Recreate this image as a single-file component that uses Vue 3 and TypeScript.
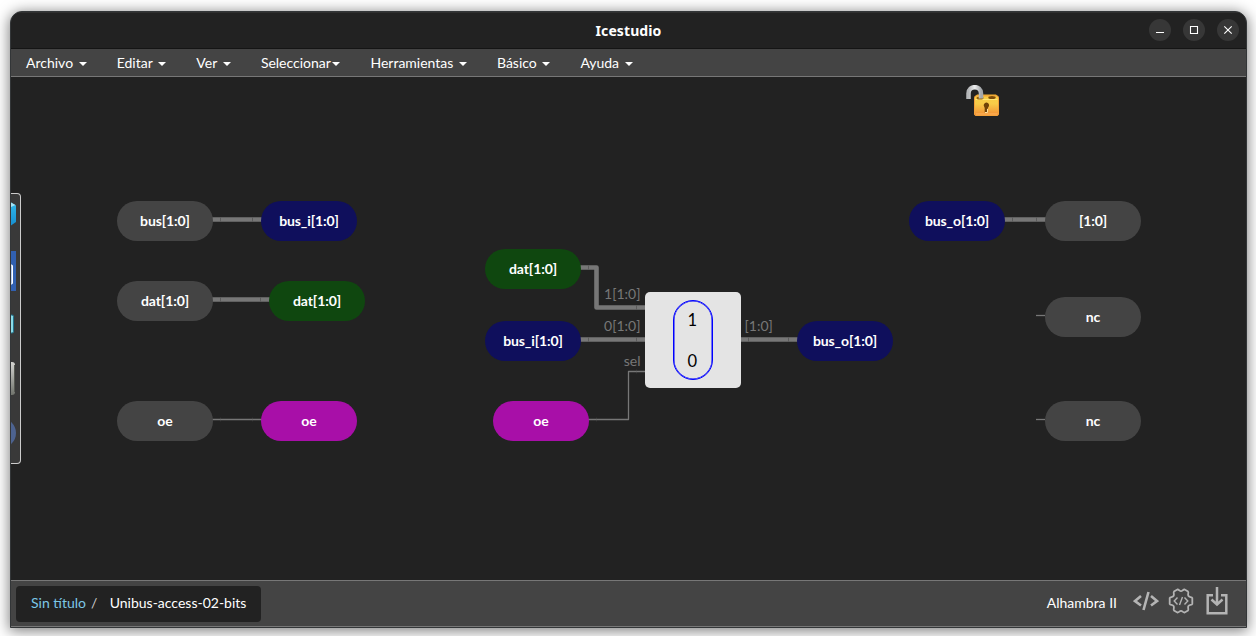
<script setup lang="ts">
interface Menu { label: string; tight?: boolean }
interface Block { label: string; x: number; y: number; kind: string }
interface Port { label: string; x: number; y: number; side: string }
interface Wire { d: string; bus: boolean; ticks: number[][] }

const menus: Menu[] = [
  { label: 'Archivo' },
  { label: 'Editar' },
  { label: 'Ver' },
  { label: 'Seleccionar', tight: true },
  { label: 'Herramientas' },
  { label: 'Básico' },
  { label: 'Ayuda' },
]

// Block coordinates are relative to the top-left corner of the canvas.
const blocks: Block[] = [
  { label: 'bus[1:0]', x: 106, y: 124, kind: 'io' },
  { label: 'bus_i[1:0]', x: 250, y: 124, kind: 'navy' },
  { label: 'dat[1:0]', x: 106, y: 204, kind: 'io' },
  { label: 'dat[1:0]', x: 258, y: 204, kind: 'green' },
  { label: 'oe', x: 106, y: 324, kind: 'io' },
  { label: 'oe', x: 250, y: 324, kind: 'magenta' },
  { label: 'dat[1:0]', x: 474, y: 172, kind: 'green' },
  { label: 'bus_i[1:0]', x: 474, y: 244, kind: 'navy' },
  { label: 'oe', x: 482, y: 324, kind: 'magenta' },
  { label: 'bus_o[1:0]', x: 786, y: 244, kind: 'navy' },
  { label: 'bus_o[1:0]', x: 898, y: 124, kind: 'navy' },
  { label: '[1:0]', x: 1034, y: 124, kind: 'io' },
  { label: 'nc', x: 1034, y: 220, kind: 'io' },
  { label: 'nc', x: 1034, y: 324, kind: 'io' },
]

const ports: Port[] = [
  { label: '1[1:0]', x: 629.5, y: 217, side: 'left' },
  { label: '0[1:0]', x: 629.5, y: 249, side: 'left' },
  { label: 'sel', x: 629.5, y: 284, side: 'left' },
  { label: '[1:0]', x: 733.5, y: 249, side: 'right' },
]

const wires: Wire[] = [
  { d: 'M200 142.5H252', bus: true, ticks: [[209.5, 142.5], [241.5, 142.5]] },
  { d: 'M200 222.5H260', bus: true, ticks: [[209.5, 222.5], [249.5, 222.5]] },
  { d: 'M200 342.5H252', bus: false, ticks: [[209.5, 342.5], [241.5, 342.5]] },
  { d: 'M568 190.5H585.5V230.5H634', bus: true, ticks: [[577.5, 190.5], [625.5, 230.5]] },
  { d: 'M568 262.5H634', bus: true, ticks: [[577.5, 262.5], [625.5, 262.5]] },
  { d: 'M576 342.5H617.5V294.5H634', bus: false, ticks: [[585.5, 342.5], [625.5, 294.5]] },
  { d: 'M730 262.5H788', bus: true, ticks: [[737.5, 262.5], [777.5, 262.5]] },
  { d: 'M992 142.5H1036', bus: true, ticks: [[1001.5, 142.5], [1025.5, 142.5]] },
  { d: 'M1025 238.5H1034', bus: false, ticks: [] },
  { d: 'M1025 342.5H1034', bus: false, ticks: [] },
]
</script>

<template>
  <main class="desktop">
    <section class="window">
      <header class="titlebar">
        <span class="title">Icestudio</span>
        <div class="controls">
          <span class="control"><svg viewBox="0 0 22 22"><path d="M7 13.5h8" /></svg></span>
          <span class="control"><svg viewBox="0 0 22 22"><path d="M7.5 7.5h7v7h-7z" /></svg></span>
          <span class="control"><svg viewBox="0 0 22 22"><path d="M7.3 7.3l7.4 7.4M14.7 7.3l-7.4 7.4" /></svg></span>
        </div>
      </header>

      <nav class="menubar">
        <span v-for="m in menus" :key="m.label" class="menu">{{ m.label }}<i class="caret" :class="{ tight: m.tight }"></i></span>
      </nav>

      <div class="canvas">
        <svg class="wires" width="1235" height="503" viewBox="0 0 1235 503">
          <g v-for="(w, i) in wires" :key="i">
            <path :d="w.d" :class="w.bus ? 'wire bus' : 'wire'" />
            <path v-for="(t, k) in w.ticks" :key="k" :class="w.bus ? 'tick' : 'tick faint'" :d="`M${t[0]} ${t[1] - 2}v4`" />
          </g>
        </svg>

        <div v-for="(b, i) in blocks" :key="i" class="block" :class="b.kind" :style="{ left: b.x + 'px', top: b.y + 'px' }">{{ b.label }}</div>
        <span v-for="(p, i) in ports" :key="'p' + i" class="port" :class="p.side" :style="{ left: p.x + 'px', top: p.y + 'px' }">{{ p.label }}</span>

        <div class="mux"><div class="mux-shape"><span>1</span><span>0</span></div></div>

        <svg class="lock" width="36" height="34" viewBox="0 0 36 34">
          <defs>
            <linearGradient id="gold" x1="0" y1="0" x2="0" y2="1">
              <stop offset="0" stop-color="#f9cf45" /><stop offset="0.4" stop-color="#f8cb48" /><stop offset="1" stop-color="#f28d35" />
            </linearGradient>
            <linearGradient id="steel" x1="0" y1="0" x2="1" y2="0">
              <stop offset="0" stop-color="#b5b7b9" /><stop offset="0.5" stop-color="#eceded" /><stop offset="1" stop-color="#a4a7aa" />
            </linearGradient>
          </defs>
          <path d="M10 11.500l2-2h19l2 2z" fill="#efb02e" />
          <rect x="9.500" y="11" width="24" height="19.500" rx="1.500" fill="url(#gold)" stroke="#f4a13a" />
          <path d="M10.500 14.500h22" stroke="#ffe477" />
          <path d="M11 29h21.500" stroke="#ffb75c" />
          <ellipse cx="15" cy="13" rx="3.500" ry="1.500" fill="#98640c" />
          <ellipse cx="27" cy="12.500" rx="3.700" ry="1.500" fill="#7c4b08" />
          <path d="M3.500 14V8.500C3.500 0 16 0 16 8.500V13.500" fill="none" stroke="url(#steel)" stroke-width="4.500" />
          <path d="M18.700 20.500a2.700 2.700 0 1 1 4.600 1.700l-.6 1V27.500h-3V23z" fill="#704207" />
          <path d="M22.500 24v3.500h-2.500" fill="none" stroke="#ffe1a0" />
        </svg>

        <aside class="toolbox">
          <svg width="9" height="269" viewBox="0 0 9 269">
            <defs>
              <linearGradient id="cube" x1="0" y1="0" x2="0" y2="1"><stop offset="0" stop-color="#32b8e8" /><stop offset="1" stop-color="#168fd1" /></linearGradient>
              <linearGradient id="chip" x1="0" y1="0" x2="0" y2="1"><stop offset="0" stop-color="#d4d4d1" /><stop offset="1" stop-color="#70736c" /></linearGradient>
            </defs>
            <path d="M0 8.500l5 3V28l-5 3.500z" fill="url(#cube)" />
            <path d="M0 8.500l4.500 2.500L0 13z" fill="#a5e3f5" />
            <path d="M0 57h5v40H0z" fill="#3160b1" />
            <rect x="-4" y="71" width="5.500" height="19" rx="1" fill="#b9cff5" stroke="#fff" />
            <rect x="-4" y="121" width="6.500" height="18" rx="1.500" fill="#8bdbe8" stroke="#21728b" />
            <rect x="-6" y="168" width="10" height="33" rx="3" fill="url(#chip)" />
            <path d="M3.500 171v27" stroke="#565952" />
            <circle cx="-10" cy="239" r="15" fill="#4d6390" />
          </svg>
        </aside>
      </div>

      <footer class="statusbar">
        <div class="breadcrumb"><span class="root">Sin título</span><span class="slash">/</span><span class="leaf">Unibus-access-02-bits</span></div>
        <div class="tools">
          <span class="board">Alhambra II</span>
          <svg class="code" width="26" height="22" viewBox="0 0 26 22"><path d="M8 6L2 11l6 4.500M18 6l6 5-6 4.500M15.500 2l-5 18" /></svg>
          <svg class="gear" width="26" height="26" viewBox="0 0 26 26">
            <path d="M13 3.200C14.500 3.200 15 1.200 16.700 1.500L20 3.500C21 4.600 19.500 6.200 20.300 7.800C21.200 9.400 23.800 8.700 24.300 10V16C23.800 17.300 21.200 16.600 20.300 18.200C19.500 19.800 21 21.400 20 22.500L16.700 24.500C15 24.800 14.500 22.800 13 22.800S11 24.800 9.300 24.500L6 22.500C5 21.400 6.500 19.800 5.700 18.200C4.800 16.600 2.200 17.300 1.700 16V10C2.200 8.700 4.800 9.400 5.700 7.800C6.500 6.200 5 4.600 6 3.500L9.300 1.500C11 1.200 11.500 3.200 13 3.200Z" />
            <path class="fine" d="M9.500 9.500L6.200 13l3.300 3.500M16.500 9.500l3.300 3.500-3.300 3.500M14.500 9l-3 8" />
          </svg>
          <svg class="save" width="22" height="28" viewBox="0 0 22 28">
            <path d="M7 8.300H1.700V26.300h18.600V8.300H15" /><path d="M11 0v17M5.500 12.500l5.500 5 5.500-5" />
          </svg>
        </div>
      </footer>
    </section>
  </main>
</template>

<style>
body { margin: 0; background: #fff; }
</style>

<style scoped>
.desktop {
  box-sizing: border-box;
  width: 1256px;
  height: 636px;
  padding: 11px 9px 8px 10px;
  overflow: hidden;
  background: #fff;
  font-family: Lato, "Liberation Sans", sans-serif;
  font-size: 14px;
  color: #fff;
}
.window {
  box-sizing: border-box;
  width: 1237px;
  height: 617px;
  display: flex;
  flex-direction: column;
  overflow: hidden;
  border: 1px solid #333638;
  border-radius: 12px 12px 0 0;
  background: #222;
  box-shadow: 0 2px 14px 1px rgba(0, 0, 0, 0.5);
}
.titlebar {
  box-sizing: border-box;
  height: 37px;
  display: grid;
  grid-template-columns: 1fr auto 1fr;
  align-items: center;
  border-top: 1px solid #303030;
  border-bottom: 1px solid #151515;
}
.title {
  grid-column: 2;
  font: bold 14px/20px "Noto Sans", sans-serif;
  letter-spacing: 0.1px;
}
.controls { display: flex; justify-content: flex-end; gap: 12px; padding: 0 7px 2px 0; }
.control { width: 22px; height: 22px; border-radius: 50%; background: #373737; }
.control svg { display: block; fill: none; stroke: #fff; stroke-width: 1.1; }
.menubar {
  box-sizing: border-box;
  height: 28px;
  display: flex;
  background: #444;
  border-bottom: 1px solid #777;
}
.menu { padding: 0 15px; line-height: 28px; white-space: nowrap; }
.caret {
  display: inline-block;
  margin-left: 5.6px;
  vertical-align: middle;
  border-top: 4px solid #fff;
  border-right: 4px solid transparent;
  border-left: 4px solid transparent;
}
.caret.tight { margin-left: 1.5px; }
.canvas { position: relative; height: 503px; background: #222; }
.wires { position: absolute; left: 0; top: 0; }
.wire { fill: none; stroke: #777; stroke-width: 1.3; stroke-linejoin: round; }
.wire.bus { stroke-width: 4.6; }
.tick { stroke: #555; stroke-width: 0.8; }
.tick.faint { stroke-opacity: 0.4; }
.block {
  position: absolute;
  width: 96px;
  height: 40px;
  border-radius: 20px;
  font-weight: 700;
  line-height: 39.5px;
  letter-spacing: -0.1px;
  text-align: center;
}
.io { background: #444; }
.navy { background: #0f0f5c; }
.green { background: #0f470f; }
.magenta { background: #a80fa8; }
.port { position: absolute; line-height: 0; color: #777; white-space: nowrap; }
.port.left { transform: translateX(-100%); }
.mux {
  position: absolute;
  left: 634px;
  top: 215px;
  width: 96px;
  height: 96px;
  display: flex;
  align-items: center;
  justify-content: center;
  border-radius: 5px;
  background: #e4e4e4;
}
.mux-shape {
  box-sizing: border-box;
  width: 40px;
  height: 80px;
  display: flex;
  flex-direction: column;
  align-items: center;
  border: 1.5px solid #00f;
  border-radius: 20px;
  color: #000;
  font-size: 18px;
  box-shadow: inset 0 0 0 0.5px #00f;
}
.mux-shape span {
  flex: none;
  height: 41px;
  margin-right: 1px;
  line-height: 37px;
  transform: scaleX(0.92);
}
.lock { position: absolute; left: 954px; top: 8px; }
.toolbox {
  position: absolute;
  left: 0;
  top: 116px;
  width: 9px;
  height: 269px;
  background: #393939;
  border: 1px solid #ccc;
  border-left: 0;
  border-radius: 0 4px 4px 0;
}
.toolbox svg { display: block; }
.statusbar {
  box-sizing: border-box;
  height: 47px;
  display: flex;
  justify-content: space-between;
  padding: 5px 18px 4px 5px;
  background: #444;
  border-top: 1px solid #777;
  border-bottom: 1px solid #777;
}
.breadcrumb {
  box-sizing: border-box;
  width: 245px;
  height: 36px;
  padding-left: 15px;
  border-radius: 4px;
  background: #222;
  line-height: 34px;
  white-space: nowrap;
}
.root { color: #7cc7e6; }
.slash { margin: 0 12.4px 0 5px; color: #ccc; }
.tools { display: flex; align-items: flex-start; }
.board { margin-right: 16px; line-height: 34px; }
.tools svg { fill: none; stroke: #b4b4b4; }
.code { margin: 4px 9px 0 0; stroke-width: 2.6; }
.gear { margin: 2px 12px 0 0; stroke-width: 1.8; }
.gear .fine { stroke-width: 1.4; }
.save { margin-top: 1px; stroke-width: 2.5; }
</style>
